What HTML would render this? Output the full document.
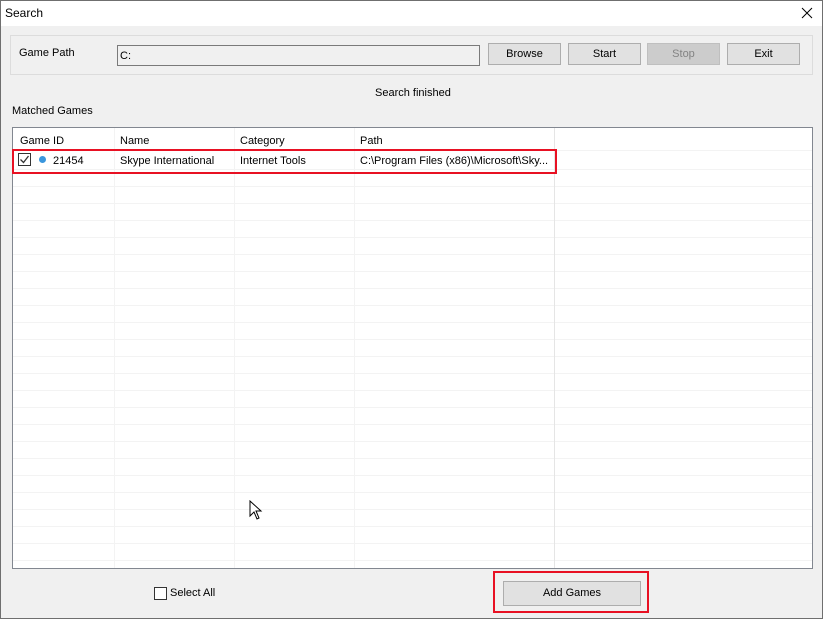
<!DOCTYPE html>
<html><head><style>
*{margin:0;padding:0;box-sizing:border-box}
body{width:823px;height:619px;background:#f0f0f0;font-family:"Liberation Sans",sans-serif;font-size:11px;color:#000;position:relative;overflow:hidden}
.a{position:absolute}
.btn{position:absolute;height:22px;background:#e1e1e1;border:1px solid #adadad;text-align:center;line-height:20px}
</style></head><body>
<div class="a" style="left:0;top:0;width:823px;height:619px;border:1px solid #6f6f6f"></div>
<div class="a" style="left:1px;top:1px;width:821px;height:25px;background:#fff"></div>
<div class="a" style="left:5px;top:6px;font-size:12px">Search</div>
<svg class="a" style="left:801px;top:7px" width="12" height="12"><path d="M1 1 L11 11 M11 1 L1 11" stroke="#000" stroke-width="1"/></svg>
<div class="a" style="left:10px;top:35px;width:803px;height:40px;border:1px solid #dcdcdc"></div>
<div class="a" style="left:19px;top:47px">Game Path</div>
<div class="a" style="left:117px;top:45px;width:363px;height:21px;border:1px solid #7a7a7a;background:#f0f0f0;padding:4px 2px">C:</div>
<div class="btn" style="left:488px;top:43px;width:73px">Browse</div>
<div class="btn" style="left:568px;top:43px;width:73px">Start</div>
<div class="btn" style="left:647px;top:43px;width:73px;background:#cccccc;border-color:#bfbfbf;color:#838383">Stop</div>
<div class="btn" style="left:727px;top:43px;width:73px">Exit</div>
<div class="a" style="left:375px;top:87px">Search finished</div>
<div class="a" style="left:12px;top:105px">Matched Games</div>
<div class="a" style="left:12px;top:127px;width:801px;height:442px;border:1px solid #828790;background:#fff;overflow:hidden">
 <div class="a" style="left:0;top:41px;width:800px;height:400px;background:repeating-linear-gradient(to bottom,#f3f3f3 0,#f3f3f3 1px,transparent 1px,transparent 17px)"></div>
 <div class="a" style="left:101px;top:0;width:1px;height:442px;background:#f3f3f3"></div>
 <div class="a" style="left:221px;top:0;width:1px;height:442px;background:#f3f3f3"></div>
 <div class="a" style="left:341px;top:0;width:1px;height:442px;background:#f3f3f3"></div>
 <div class="a" style="left:541px;top:0;width:1px;height:442px;background:#e5e5e5"></div>
 <div class="a" style="left:0;top:22px;width:800px;height:1px;background:#f3f3f3"></div>
 <div class="a" style="left:7px;top:7px">Game ID</div>
 <div class="a" style="left:107px;top:7px">Name</div>
 <div class="a" style="left:227px;top:7px">Category</div>
 <div class="a" style="left:347px;top:7px">Path</div>
 <div class="a" style="left:5px;top:25px;width:13px;height:13px;border:1px solid #333"><svg width="11" height="11" style="position:absolute;left:0;top:0"><path d="M1.5 5.5 L4.5 8.5 L9.5 2" stroke="#333" stroke-width="1.3" fill="none"/></svg></div>
 <div class="a" style="left:26px;top:28px;width:7px;height:7px;border-radius:50%;background:#3a96dd"></div>
 <div class="a" style="left:40px;top:27px">21454</div>
 <div class="a" style="left:107px;top:27px">Skype International</div>
 <div class="a" style="left:227px;top:27px">Internet Tools</div>
 <div class="a" style="left:347px;top:27px">C:\Program Files (x86)\Microsoft\Sky...</div>
</div>
<div class="a" style="left:12px;top:149px;width:545px;height:25px;border:2px solid #e81123"></div>
<svg class="a" style="left:249px;top:500px" width="14" height="20"><path d="M1 1 L1 16 L5 12 L8 19 L10 18 L7 11 L12 11 Z" fill="#fff" stroke="#000" stroke-width="1"/></svg>
<div class="a" style="left:154px;top:587px;width:13px;height:13px;border:1px solid #333;background:#fff"></div>
<div class="a" style="left:170px;top:587px">Select All</div>
<div class="a" style="left:493px;top:571px;width:156px;height:42px;border:2px solid #e81123"></div>
<div class="btn" style="left:503px;top:581px;width:138px;height:25px;line-height:23px">Add Games</div>
</body></html>
